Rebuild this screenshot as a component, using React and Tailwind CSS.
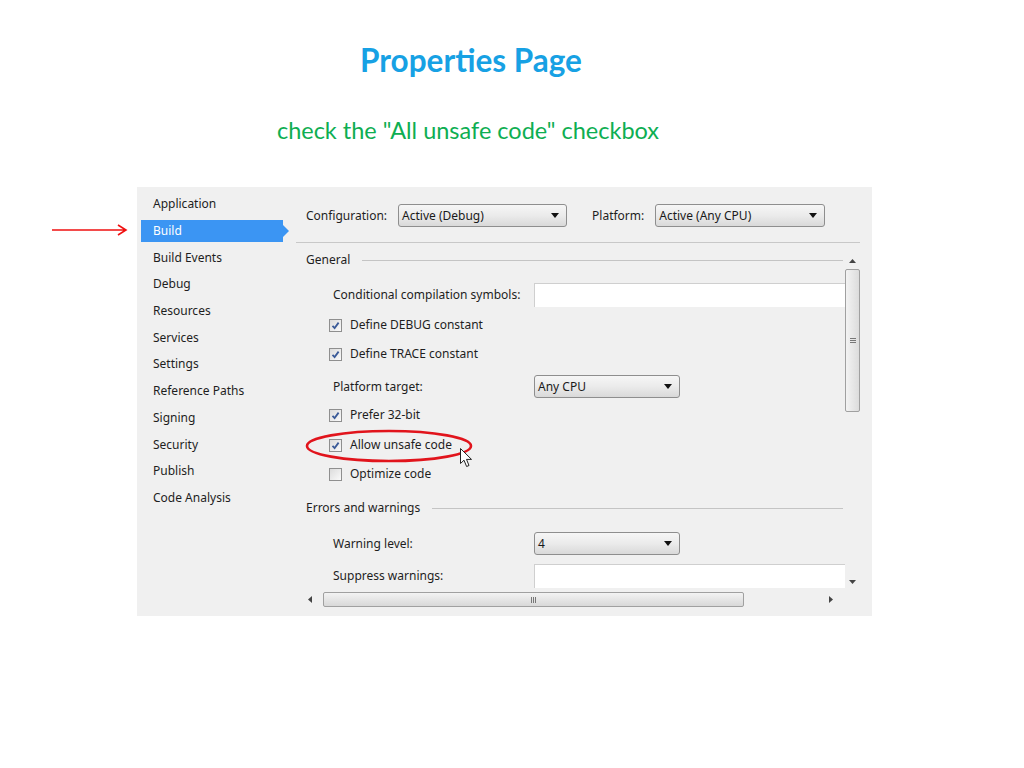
import React from "react";

const navItems = [
  "Application",
  "Build",
  "Build Events",
  "Debug",
  "Resources",
  "Services",
  "Settings",
  "Reference Paths",
  "Signing",
  "Security",
  "Publish",
  "Code Analysis",
];

const Caret = () => (
  <svg width="8" height="5" viewBox="0 0 8 5">
    <path d="M0 0 L8 0 L4 5 Z" fill="#111" />
  </svg>
);

const Select = ({ value, width }) => (
  <div
    className={`flex items-center justify-between h-[23px] ${width} rounded-[3px] border border-[#8e8e8e] bg-linear-to-b from-[#f6f6f6] via-[#ebebeb] to-[#d9d9d9] pl-[3px] pr-[7px]`}
  >
    <span className="text-[#1a1a1a]">{value}</span>
    <Caret />
  </div>
);

const CheckBox = ({ checked }) => (
  <div className="w-[13px] h-[13px] border border-[#8f8f8f] bg-linear-to-br from-[#dcdcdc] to-[#fafafa] flex items-center justify-center">
    {checked && (
      <svg width="9" height="9" viewBox="0 0 9 9">
        <path d="M1.5 4.8 L3.6 7 L7.6 1.6" fill="none" stroke="#3a5a98" strokeWidth="1.8" />
      </svg>
    )}
  </div>
);

const CheckRow = ({ label, checked, mt }) => (
  <div className={`flex items-center h-[20px] pl-[33px] gap-[8px] ${mt}`}>
    <CheckBox checked={checked} />
    <span>{label}</span>
  </div>
);

const TextBox = () => (
  <div className="h-[24px] w-[330px] shrink-0 bg-white border-t border-l border-[#cfcfcf]" />
);

const SectionHeader = ({ title, mt }) => (
  <div className={`flex items-center h-[18px] pl-[10px] pr-[2px] ${mt}`}>
    <span>{title}</span>
    <div className="flex-1 ml-[12px] border-t border-[#c4c4c4]" />
  </div>
);

const FieldRow = ({ label, children, mt, h }) => (
  <div className={`flex items-center ${h} pl-[37px] ${mt}`}>
    <span className="w-[201px] shrink-0">{label}</span>
    {children}
  </div>
);

const Thumb = ({ className, children }) => (
  <div
    className={`flex items-center justify-center rounded-[2px] border border-[#a0a0a0] ${className}`}
  >
    {children}
  </div>
);

export default function App() {
  return (
    <div className="w-[1024px] h-[768px] bg-white relative overflow-hidden">
      <div className="w-[942px] text-center pt-[40px] font-['Lato',sans-serif] font-bold text-[31.5px] leading-[40px] text-[#17a1e4]">
        Properties Page
      </div>
      <div className="w-[936px] text-center mt-[35px] font-['Lato',sans-serif] text-[23.5px] leading-[30px] text-[#0eae52]">
        check the "All unsafe code" checkbox
      </div>

      <div className="flex items-start mt-[42px] pl-[52px] font-['Noto_Sans',sans-serif] text-[12px] text-[#1e1e1e]">
        <svg width="76" height="12" viewBox="0 0 76 12" className="mt-[37px] mr-[9px]">
          <path d="M0 6 L74 6 M66 1 L74 6 L66 11" fill="none" stroke="#f01010" strokeWidth="1.6" />
        </svg>

        <div className="w-[735px] h-[429px] bg-[#f0f0f0] flex">
          <div className="w-[159px] shrink-0 pt-[4px]">
            {navItems.map((item) =>
              item === "Build" ? (
                <div key={item} className="h-[26.7px] flex items-center pl-[4px]">
                  <div className="h-[22px] w-[142px] bg-[#3b95f3] text-white flex items-center pl-[12px]">
                    {item}
                  </div>
                  <div className="w-0 h-0 border-y-[6px] border-y-transparent border-l-[6px] border-l-[#3b95f3]" />
                </div>
              ) : (
                <div key={item} className="h-[26.7px] flex items-center pl-[16px]">
                  {item}
                </div>
              )
            )}
          </div>

          <div className="flex-1 min-w-0 flex flex-col pr-[12px]">
            <div className="h-[56px] shrink-0 border-b border-[#c8c8c8] flex items-center pl-[10px] pt-[2px]">
              <span>Configuration:</span>
              <div className="ml-[11px]">
                <Select value="Active (Debug)" width="w-[169px]" />
              </div>
              <span className="ml-[25px]">Platform:</span>
              <div className="ml-[11px]">
                <Select value="Active (Any CPU)" width="w-[170px]" />
              </div>
            </div>

            <div className="flex mt-[8px]">
              <div className="flex-1 min-w-0 h-[339px] overflow-hidden relative">
                <SectionHeader title="General" mt="" />
                <FieldRow label="Conditional compilation symbols:" mt="mt-[14px]" h="h-[24px]">
                  <TextBox />
                </FieldRow>
                <CheckRow label="Define DEBUG constant" checked mt="mt-[8px]" />
                <CheckRow label="Define TRACE constant" checked mt="mt-[9px]" />
                <FieldRow label="Platform target:" mt="mt-[11px]" h="h-[23px]">
                  <Select value="Any CPU" width="w-[146px]" />
                </FieldRow>
                <CheckRow label="Prefer 32-bit" checked mt="mt-[7px]" />
                <CheckRow label="Allow unsafe code" checked mt="mt-[10px]" />
                <CheckRow label="Optimize code" mt="mt-[9px]" />
                <SectionHeader title="Errors and warnings" mt="mt-[15px]" />
                <FieldRow label="Warning level:" mt="mt-[15px]" h="h-[23px]">
                  <Select value="4" width="w-[146px]" />
                </FieldRow>
                <FieldRow label="Suppress warnings:" mt="mt-[9px]" h="h-[24px]">
                  <TextBox />
                </FieldRow>

                <svg
                  width="170"
                  height="36"
                  viewBox="0 0 170 36"
                  className="absolute left-[8px] top-[177px]"
                >
                  <ellipse cx="85" cy="18" rx="82" ry="15" fill="none" stroke="#e1141c" strokeWidth="2.6" />
                </svg>
                <svg
                  width="13"
                  height="20"
                  viewBox="0 0 13 20"
                  className="absolute left-[164px] top-[197px]"
                >
                  <path
                    d="M0.5 0.5 L0.5 15.5 L4 12.2 L6.6 18.5 L9 17.5 L6.5 11.4 L11.5 11.4 Z"
                    fill="white"
                    stroke="#222"
                    strokeWidth="1"
                    strokeLinejoin="round"
                  />
                </svg>
              </div>

              <div className="w-[15px] shrink-0 h-[338px] mt-[1px] flex flex-col items-center">
                <div className="h-[17px] flex items-center justify-center">
                  <svg width="7" height="4" viewBox="0 0 7 4">
                    <path d="M0 4 L3.5 0 L7 4 Z" fill="#444" />
                  </svg>
                </div>
                <Thumb className="w-[15px] h-[143px] bg-linear-to-r from-[#f3f3f3] to-[#dcdcdc]">
                  <div className="flex flex-col gap-[1px]">
                    <div className="w-[6px] h-[1px] bg-[#777]" />
                    <div className="w-[6px] h-[1px] bg-[#777]" />
                    <div className="w-[6px] h-[1px] bg-[#777]" />
                  </div>
                </Thumb>
                <div className="flex-1" />
                <div className="h-[17px] flex items-center justify-center">
                  <svg width="7" height="4" viewBox="0 0 7 4">
                    <path d="M0 0 L7 0 L3.5 4 Z" fill="#444" />
                  </svg>
                </div>
              </div>
            </div>

            <div className="flex items-center h-[15px] mt-[2px] w-[549px]">
              <div className="w-[27px] flex items-center justify-center">
                <svg width="4" height="7" viewBox="0 0 4 7">
                  <path d="M4 0 L0 3.5 L4 7 Z" fill="#444" />
                </svg>
              </div>
              <Thumb className="w-[421px] h-[15px] bg-linear-to-b from-[#f3f3f3] to-[#d8d8d8]">
                <div className="flex gap-[1px]">
                  <div className="w-[1px] h-[6px] bg-[#777]" />
                  <div className="w-[1px] h-[6px] bg-[#777]" />
                  <div className="w-[1px] h-[6px] bg-[#777]" />
                </div>
              </Thumb>
              <div className="flex-1" />
              <div className="w-[28px] flex items-center justify-center">
                <svg width="4" height="7" viewBox="0 0 4 7">
                  <path d="M0 0 L4 3.5 L0 7 Z" fill="#444" />
                </svg>
              </div>
            </div>
          </div>
        </div>
      </div>
    </div>
  );
}
